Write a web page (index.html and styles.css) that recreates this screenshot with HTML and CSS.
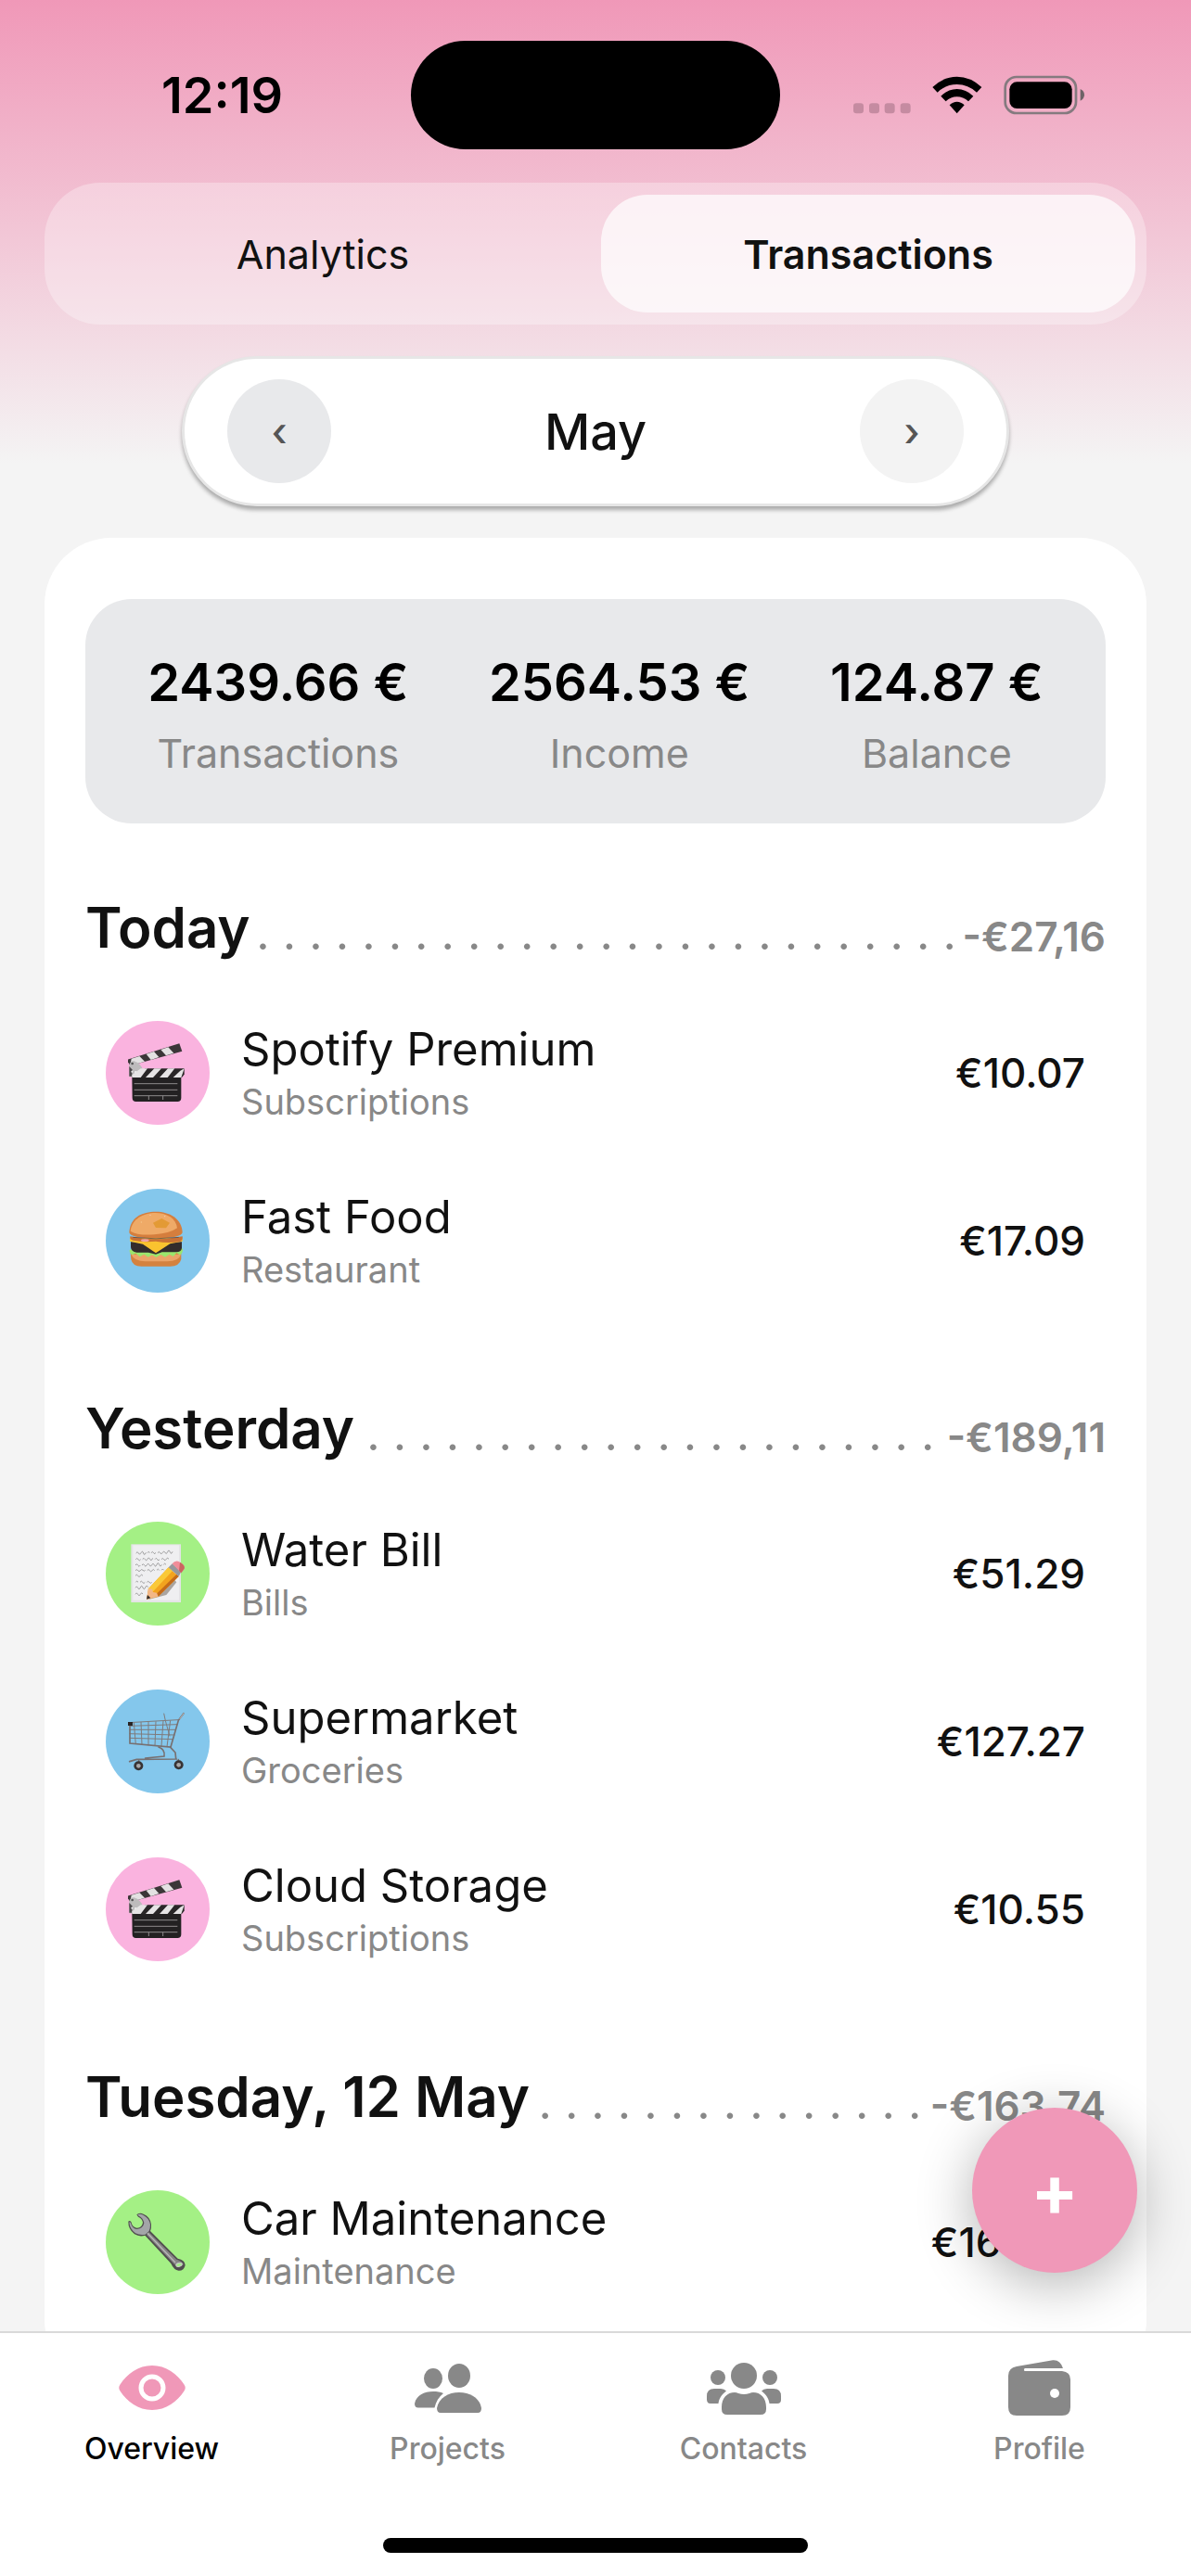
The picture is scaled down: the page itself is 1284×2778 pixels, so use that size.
FILE: index.html
```html
<!DOCTYPE html>
<html lang="en">
<head>
  <meta charset="UTF-8">
  <meta name="viewport" content="width=device-width, initial-scale=1.0">
  <title>Transactions</title>
  <link rel="stylesheet" href="styles.css">
</head>
<body>

  <!-- icons that are used more than once -->
  <svg class="defs" aria-hidden="true">
    <symbol id="clapper" viewBox="174 137 192 192">
      <path d="M170 191 L340 138 L349 163 L181 210Z" fill="#3b3638"/>
      <path d="M185 187 L211 179 L199 205 L181 210Z M233 172 L258 164 L274 182 L248 191Z M280 158 L304 150 L322 169 L297 177Z M192 186 L211 179 L228 196 L205 203Z" fill="#e3e1e2"/>
      <path d="M178 208 Q181 194 194 195 Q220 205 222 226 L215 246 H178Z" fill="#bdbbbc"/>
      <path d="M178 212 V244 H187 V222Z" fill="#4a4648"/>
      <circle cx="188" cy="203" r="4" fill="#555"/><circle cx="199" cy="231" r="4" fill="#f0f0f0"/><circle cx="187" cy="229" r="3" fill="#eee"/>
      <path d="M187 244 H346 V314 Q346 326 334 326 H200 Q188 326 188 314Z" fill="#232122"/>
      <path d="M229 219 H356 V238 L348 248 H203Z" fill="#292627"/>
      <path d="M215 219 H237 L215 248 H187 V240Z M259 219 H282 L255 248 H231Z M303 219 H325 L302 248 H276Z M343 226 L356 219 L346 248 H320Z" fill="#e6e4e5"/>
      <path d="M194 268 H334 M194 288 H334 M194 307 H334 M241 307 V320 M287 307 V320" stroke="#8d8a8b" stroke-width="3" fill="none"/>
    </symbol>
  </svg>

  <header class="status-bar">
    <span class="time">12:19</span>
    <span class="island"></span>
    <svg class="status-icons" viewBox="119 95 750 129" aria-hidden="true">
      <g fill="#c58ba1">
        <rect x="119" y="186" width="33" height="33" rx="10"/>
        <rect x="170" y="186" width="33" height="33" rx="10"/>
        <rect x="220" y="186" width="33" height="33" rx="10"/>
        <rect x="271" y="186" width="33" height="33" rx="10"/>
      </g>
      <path d="M375 134 Q410 100 454 100 T534 134 L518 151 Q490 125 454 125 T391 151Z"/>
      <path d="M402 163 Q425 140 454 140 T507 163 L491 180 Q474 165 454 165 T418 180Z"/>
      <path d="M430 192 Q441 181 454 181 T478 192 L454 219Z"/>
      <rect x="610" y="101" width="229" height="117" rx="36" fill="none" stroke="#857a7f" stroke-width="8"/>
      <rect x="624" y="117" width="202" height="86" rx="24"/>
      <path d="M853 140 Q866 146 866 159 T853 178Z" fill="#6e6367"/>
    </svg>
  </header>

  <div class="tabs" role="tablist">
    <button class="tab" type="button" role="tab" aria-selected="false">Analytics</button>
    <button class="tab active" type="button" role="tab" aria-selected="true">Transactions</button>
  </div>

  <div class="month-picker">
    <button class="month-button" type="button" aria-label="Previous month">‹</button>
    <h1>May</h1>
    <button class="month-button next" type="button" aria-label="Next month">›</button>
  </div>

  <main class="content">
    <div class="card">
      <dl class="summary">
        <div class="stat"><dd>2439.66 €</dd><dt>Transactions</dt></div>
        <div class="stat"><dd>2564.53 €</dd><dt>Income</dt></div>
        <div class="stat"><dd>124.87 €</dd><dt>Balance</dt></div>
      </dl>

      <section class="day">
        <div class="day-header">
          <h2>Today</h2>
          <span class="dots" aria-hidden="true">. . . . . . . . . . . . . . . . . . . . . . . . . . .</span>
          <span class="total">-€27,16</span>
        </div>
        <ul class="items">
          <li class="item">
            <span class="icon pink"><svg><use href="#clapper"/></svg></span>
            <div class="info"><h3>Spotify Premium</h3><p>Subscriptions</p></div>
            <span class="amount">€10.07</span>
          </li>
          <li class="item">
            <span class="icon blue">
              <svg viewBox="174 680 192 192">
                <path d="M182 815 H346 V836 Q340 859 310 859 H218 Q188 859 184 836Z" fill="#d4823f"/>
                <path d="M184 820 H345 Q340 842 300 843 H230 Q194 842 184 820Z" fill="#eba468"/>
                <path d="M179 806 Q190 800 202 808 H330 Q342 798 351 802 Q352 818 341 822 L331 816 L320 827 L308 820 L294 829 L280 821 L265 830 L252 822 L239 829 L226 820 L212 828 L199 817 L188 822 Q178 818 179 806Z" fill="#9be66d"/>
                <path d="M183 780 H348 V800 Q346 813 330 813 H284 L264 820 L240 814 H202 Q184 811 183 797Z" fill="#332c2c"/>
                <path d="M180 768 H350 V778 L310 786 L264 816 L222 787 L180 778Z" fill="#fac32f"/>
                <path d="M181 762 Q264 780 350 762 Q353 776 340 780 Q300 785 264 778 Q225 782 190 775 Q179 773 181 762Z" fill="#ca7135"/>
                <path d="M178 749 C180 700 220 682 264 682 S348 704 350 749 Q347 768 264 768 T178 749Z" fill="#d57e3d"/>
                <path d="M182 745 C186 705 225 686 262 686 S330 704 333 735 Q310 752 260 756 Q205 760 182 745Z" fill="#efaa67"/>
                <path d="M190 765 Q264 774 338 765" stroke="#4b4039" stroke-width="2" fill="none"/>
                <path d="M255 718 L283 704 L309 718 L297 735 L264 734Z" fill="#e39a35"/>
                <ellipse cx="229" cy="775" rx="13" ry="4" fill="#f0a3a7"/>
                <circle cx="246" cy="693" r="2" fill="#f7c9b4"/><circle cx="293" cy="697" r="2" fill="#f7c9b4"/><circle cx="217" cy="716" r="2" fill="#f7c990"/>
              </svg>
            </span>
            <div class="info"><h3>Fast Food</h3><p>Restaurant</p></div>
            <span class="amount">€17.09</span>
          </li>
        </ul>
      </section>

      <section class="day">
        <div class="day-header">
          <h2>Yesterday</h2>
          <span class="dots" aria-hidden="true">. . . . . . . . . . . . . . . . . . . . . .</span>
          <span class="total">-€189,11</span>
        </div>
        <ul class="items">
          <li class="item">
            <span class="icon green">
              <svg viewBox="174 138 192 192">
                <rect x="184" y="139" width="161" height="188" fill="#e4e4e6"/>
                <rect x="190" y="142" width="149" height="178" fill="#efeff1"/>
                <path d="M200 168 q5 -8 8 0 t8 -1 t8 1 t8 -2 m5 1 q4 -8 7 0 m5 0 q4 -7 8 0 t6 -1 m7 1 q4 -7 8 0 t8 -1 t8 0 t8 -2 t8 0 t8 -1 M199 188 q4 -7 8 0 t8 0 m6 0 q4 -8 8 0 t8 -1 t8 0 t9 -3 m7 4 q4 -8 8 0 t6 0 m7 0 q4 -7 8 0 t8 -1 t8 0 M198 207 q4 -8 8 0 t8 0 m5 0 q4 -8 8 0 t8 -1 t8 0 t8 0 t8 0 t8 -1 t8 0 t8 0 m6 0 q4 -7 8 0 M198 224 q4 -6 8 0 t8 0 t8 -1 t8 0 m6 1 q4 -7 8 0 t8 0 t8 0 m7 -1 q4 -7 8 0 m7 0 q4 -8 8 0 M198 241 q4 -7 8 0 t8 0 t8 0 M199 262 q4 -8 8 0 m6 0 q4 -7 8 0 t8 0 m6 0 q4 -6 8 0 t8 0 M198 280 q4 -9 8 0 t8 -1 t8 0 t8 0 t9 -1 M198 301 q4 -9 8 0 t8 0 t8 -1" stroke="#777" stroke-width="2" fill="none"/>
                <path d="M240 318 L298 303 L331 262 L320 250Z" fill="#a9a4a0"/>
                <path d="M234 317 L240 283 L305 214 L338 243 L272 308Z" fill="#f2a31e"/>
                <path d="M240 283 L305 214 L318 225 L254 293Z" fill="#fac938"/>
                <path d="M262 304 L331 236 L338 243 L272 308Z" fill="#c56a19"/>
                <path d="M240 283 L252 284 L255 294 L267 296 L272 308 L234 317Z" fill="#f3b787"/>
                <path d="M234 317 L237 303 L247 313Z" fill="#302b2a"/>
                <path d="M305 214 L317 202 L346 228 L338 243Z" fill="#96989c"/>
                <path d="M317 202 Q328 188 342 197 Q360 207 356 218 L346 232Z" fill="#f08d99"/>
                <path d="M342 197 Q360 207 356 218 L346 232 L339 225Z" fill="#ca6460"/>
              </svg>
            </span>
            <div class="info"><h3>Water Bill</h3><p>Bills</p></div>
            <span class="amount">€51.29</span>
          </li>
          <li class="item">
            <span class="icon blue">
              <svg viewBox="174 680 192 192">
                <g fill="none" stroke="#7f7b7c" stroke-width="3">
                  <path d="M177 715 L336 706 M178 738 L329 738 M178 751 L325 755 M179 765 L320 769 M180 726 L333 721"/>
                  <path d="M193 715 L199 785 M216 713 L219 788 M240 712 L240 789 M264 711 L261 790 M288 709 L282 791 M311 708 L300 793"/>
                  <path d="M290 685 L295 709 L309 759"/>
                </g>
                <g fill="none" stroke="#777071" stroke-width="5" stroke-linecap="round">
                  <path d="M180 719 V782 L312 794 L337 708 L354 685"/>
                  <path d="M273 794 Q295 802 291 824 L230 830 M312 796 L327 812 L329 832 M179 841 L202 834 L331 833 M337 835 V845 M209 838 V850"/>
                </g>
                <path d="M341 704 L355 684" stroke="#b7b5b6" stroke-width="3"/>
                <rect x="174" y="713" width="15" height="12" fill="#282425"/>
                <circle cx="208" cy="855" r="15" fill="#373334"/><circle cx="208" cy="855" r="7" fill="#a8a6a7"/>
                <circle cx="338" cy="852" r="15" fill="#373334"/><circle cx="338" cy="852" r="7" fill="#a8a6a7"/>
              </svg>
            </span>
            <div class="info"><h3>Supermarket</h3><p>Groceries</p></div>
            <span class="amount">€127.27</span>
          </li>
          <li class="item">
            <span class="icon pink"><svg><use href="#clapper"/></svg></span>
            <div class="info"><h3>Cloud Storage</h3><p>Subscriptions</p></div>
            <span class="amount">€10.55</span>
          </li>
        </ul>
      </section>

      <section class="day">
        <div class="day-header">
          <h2>Tuesday, 12 May</h2>
          <span class="dots" aria-hidden="true">. . . . . . . . . . . . . . .</span>
          <span class="total">-€163,74</span>
        </div>
        <ul class="items">
          <li class="item">
            <span class="icon green">
              <svg viewBox="174 142 192 192">
                <path d="M202 149 Q210 141 224 147 Q246 156 249 180 Q250 194 246 202 L335 291 Q358 295 359 312 Q356 330 338 330 Q323 329 313 307 L229 216 Q212 222 195 212 Q174 195 175 171 Q179 166 184 172 Q188 190 203 192 Q220 190 222 174 Q219 161 207 156Z" fill="#504d4e"/>
                <path d="M205 149 Q213 145 223 150 Q243 160 246 181 Q246 194 242 202 L230 213 Q213 217 198 209 Q179 195 178 173 L182 174 Q188 195 203 196 Q223 194 226 176 Q223 160 209 153Z" fill="#a3a5a8"/>
                <path d="M241 205 L331 294 Q350 299 354 311 L325 311 L234 214Z" fill="#858384"/>
                <path d="M237 209 L327 304" stroke="#b9b7b8" stroke-width="4"/>
                <ellipse cx="339" cy="311" rx="10" ry="6" fill="#a4f085" stroke="#c9c9c9" stroke-width="3" transform="rotate(-15 339 311)"/>
              </svg>
            </span>
            <div class="info"><h3>Car Maintenance</h3><p>Maintenance</p></div>
            <span class="amount">€163.74</span>
          </li>
        </ul>
      </section>
    </div>

    <button class="add-button" type="button" aria-label="Add transaction">+</button>
  </main>

  <nav class="nav">
    <div class="nav-links">
      <a class="nav-link active" href="#overview">
        <svg width="72" height="60" viewBox="0 -6 72 60">
          <path d="M1.500 20.500 C9 9 21 0 36 0 S63 9 70.500 20.500 Q73 24 70.500 27.500 C63 39 51 48 36 48 S9 39 1.500 27.500 Q-1 24 1.500 20.500Z"/>
          <circle cx="36" cy="24" r="12" fill="none" stroke="#fff" stroke-width="5"/>
        </svg>
        Overview
      </a>
      <a class="nav-link" href="#projects">
        <svg width="72" height="60" viewBox="0 -4 72 60">
          <ellipse cx="20" cy="16" rx="10" ry="11"/>
          <ellipse cx="48" cy="13" rx="12" ry="13"/>
          <path d="M24 48 C26 37 36 31 48 31 S70 37 72 48 Q72 53 68 53 H28 Q24 53 24 48Z"/>
          <path d="M0 43 C2 34 10 30 20 30 C24 30 28 30.500 31 32 C26 36 23 41 21.500 47.500 H4 Q0 47.500 0 43Z"/>
        </svg>
        Projects
      </a>
      <a class="nav-link" href="#contacts">
        <svg width="80" height="60" viewBox="0 -3 80 60">
          <circle cx="40" cy="14" r="14"/>
          <circle cx="12" cy="16" r="8"/>
          <circle cx="68" cy="16" r="8"/>
          <path d="M16 50 V48 C16 38 22 32 30 32 Q32 32 34 33 Q40 35 46 33 Q48 32 50 32 C58 32 64 38 64 48 V50 Q64 56 58 56 H22 Q16 56 16 50Z"/>
          <path d="M0 40 V36 Q0 28 8 28 H15 Q19 28 21 30.500 C16 34 13 39 12.500 44 H4 Q0 44 0 40Z"/>
          <path d="M80 40 V36 Q80 28 72 28 H65 Q61 28 59 30.500 C64 34 67 39 67.500 44 H76 Q80 44 80 40Z"/>
        </svg>
        Contacts
      </a>
      <a class="nav-link" href="#profile">
        <svg width="67" height="60" viewBox="0 0 67 60">
          <path d="M9 7 L48 .3 Q56 -.5 59 9 H18 Q17 9 17 10.500 Q17 12 18 12 H58 Q67 13 67 21 V51 Q67 60 58 60 H9 Q0 60 0 51 V17 Q0 8.500 9 7Z"/>
          <circle cx="50" cy="36" r="5" fill="#fff"/>
        </svg>
        Profile
      </a>
    </div>
    <div class="home-bar"></div>
  </nav>

</body>
</html>
```
FILE: styles.css
```css
* {
  box-sizing: border-box;
  margin: 0;
  padding: 0;
}

body {
  height: 100vh;
  display: flex;
  flex-direction: column;
  overflow: hidden;
  font-family: Inter, "Open Sans", sans-serif;
  color: #111;
  background: #f4f4f4 linear-gradient(#f098b8, #f4f4f4) no-repeat top / 100% 500px;
}

button {
  border: none;
  font-family: inherit;
  color: inherit;
  cursor: pointer;
}

.defs {
  position: absolute;
  width: 0;
  height: 0;
}

/* status bar */
.status-bar {
  display: grid;
  grid-template-columns: 1fr 398px 1fr;
  align-items: center;
  justify-items: center;
  padding-top: 44px;
  color: #000;
}

.time {
  padding-left: 36px;
  font-size: 54px;
  font-weight: 600;
}

.island {
  width: 100%;
  height: 117px;
  border-radius: 59px;
  background: #000;
}

.status-icons {
  width: 286px;
  height: 43px;
  padding-right: 36px;
}

/* analytics / transactions switch */
.tabs {
  display: flex;
  gap: 12px;
  margin: 36px 48px 34px;
  padding: 13px 12px;
  border-radius: 60px;
  background: rgba(255, 255, 255, 0.3);
}

.tab {
  flex: 1;
  height: 127px;
  border-radius: 50px;
  background: none;
  font-size: 43px;
}

.tab.active {
  background: rgba(255, 255, 255, 0.7);
  font-weight: 600;
}

.month-picker {
  display: flex;
  align-items: center;
  justify-content: space-between;
  margin: 0 196px;
  padding: 22px 46px;
  border: 3px solid #e6e6e6;
  border-radius: 81px;
  background: #fff;
  box-shadow: 0 4px 4px rgba(0, 0, 0, 0.3);
}

.month-picker h1 {
  font-size: 54px;
  font-weight: 500;
}

.month-button {
  width: 112px;
  height: 112px;
  border-radius: 50%;
  background: #e8e9eb;
  color: #555;
  font-size: 43px;
  font-weight: 500;
}

.month-button.next {
  background: #f3f3f3;
}

.content {
  position: relative;
  flex: 1;
  min-height: 0;
  margin-top: 34px;
  padding: 0 48px;
  overflow: hidden;
}

.card {
  padding: 66px 44px;
  border-radius: 72px;
  background: #fff;
}

/* month summary */
.summary {
  display: flex;
  justify-content: space-around;
  padding: 56px 24px 50px;
  border-radius: 50px;
  background: #e8e9eb;
}

.stat {
  display: flex;
  flex-direction: column;
  align-items: center;
  gap: 16px;
}

.stat dd {
  color: #000;
  font-size: 56px;
  font-weight: 600;
  line-height: 68px;
}

.stat dt {
  color: #888;
  font-size: 43px;
  line-height: 52px;
}

/* transactions grouped by day */
.day {
  padding-top: 76px;
  margin-bottom: 34px;
}

.day-header {
  display: flex;
  align-items: flex-end;
  justify-content: space-between;
  margin-bottom: 65px;
  white-space: nowrap;
}

.day-header h2 {
  font-size: 60px;
  font-weight: 600;
  line-height: 72px;
}

.dots {
  color: #888;
  font-size: 50px;
  line-height: 60px;
}

.total {
  color: #888;
  font-size: 44px;
  font-weight: 600;
  line-height: 52px;
}

.items {
  display: flex;
  flex-direction: column;
  gap: 69px;
  padding: 0 22px;
  list-style: none;
}

.item {
  display: flex;
  align-items: center;
  gap: 34px;
}

.icon {
  display: flex;
  align-items: center;
  justify-content: center;
  width: 112px;
  height: 112px;
  border-radius: 50%;
}

.icon svg {
  width: 64px;
  height: 64px;
  overflow: visible;
}

.pink {
  background: #fab3df;
}

.blue {
  background: #84c7ec;
}

.green {
  background: #a4f085;
}

.info {
  flex: 1;
}

.info h3 {
  font-size: 49px;
  font-weight: 400;
  line-height: 62px;
}

.info p {
  color: #888;
  font-size: 38px;
  line-height: 50px;
}

.amount {
  font-size: 44px;
  font-weight: 500;
}

.add-button {
  position: absolute;
  right: 58px;
  bottom: 63px;
  width: 178px;
  height: 178px;
  border-radius: 50%;
  background: #f098b8;
  box-shadow: 0 12px 60px rgba(0, 0, 0, 0.3);
  color: #fff;
  font-size: 76px;
  font-weight: 700;
}

/* bottom navigation */
.nav {
  display: flex;
  flex-direction: column;
  align-items: center;
  gap: 72px;
  padding: 29px 0 25px;
  border-top: 2px solid #d9d9d9;
  background: #fff;
}

.nav-links {
  display: flex;
  width: 100%;
  padding: 0 4px;
}

.nav-link {
  flex: 1;
  display: flex;
  flex-direction: column;
  align-items: center;
  gap: 12px;
  color: #888;
  font-size: 32px;
  font-weight: 500;
  line-height: 48px;
  text-decoration: none;
}

.nav-link svg {
  fill: #888;
}

.nav-link.active {
  color: #000;
}

.nav-link.active svg {
  fill: #f098b8;
}

.home-bar {
  width: 458px;
  height: 16px;
  border-radius: 8px;
  background: #000;
}
```
